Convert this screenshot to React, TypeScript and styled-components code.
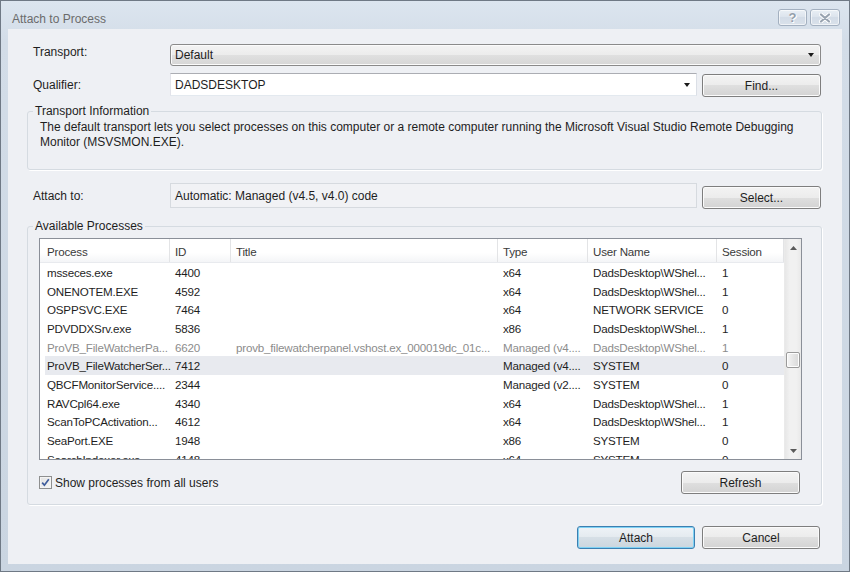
import React from "react";
import styled, { createGlobalStyle } from "styled-components";

const GlobalStyle = createGlobalStyle`
  html, body {
    margin: 0;
    padding: 0;
    background: #ccd7e3;
  }
  body {
    font-family: "Liberation Sans", Arial, sans-serif;
    font-size: 12px;
    color: #1e1e1e;
  }
  * {
    box-sizing: border-box;
  }
`;

const Window = styled.div`
  width: 850px;
  height: 572px;
  display: flex;
  flex-direction: column;
  border: 1px solid #6f7985;
  background: linear-gradient(#dce5ef, #d3dde8 40px, #cad5e1);
`;

const TitleBar = styled.div`
  height: 28px;
  display: flex;
  align-items: flex-start;
  padding: 0 9px 0 11px;
`;

const Title = styled.div`
  flex: 1;
  padding-top: 10px;
  line-height: 16px;
  color: #6b6b6b;
`;

const CaptionButtons = styled.div`
  display: flex;
  gap: 3px;
  margin-top: 8px;
`;

const CaptionButton = styled.div<{ $w: number }>`
  width: ${(p) => p.$w}px;
  height: 17px;
  border: 1px solid #a3b0c0;
  border-radius: 3px;
  background: linear-gradient(#e9eff5, #dbe3ec 50%, #d3dce7 50%, #d9e1ea);
  box-shadow: inset 0 0 0 1px rgba(255, 255, 255, 0.6);
  display: flex;
  align-items: center;
  justify-content: center;
  color: #939eab;
  font-weight: bold;
  font-size: 13px;
  text-shadow: 0 0 1px #fff, 1px 1px 0 #fff;
`;

const Frame = styled.div`
  flex: 1;
  padding: 0 7px 7px;
  display: flex;
`;

const Body = styled.div`
  flex: 1;
  background: #eef0f4;
  display: flex;
  flex-direction: column;
  padding: 15px 20px 15px 19px;
`;

const FormRow = styled.div<{ $top?: number; $h: number; $cols: string }>`
  display: grid;
  grid-template-columns: ${(p) => p.$cols};
  column-gap: 5px;
  align-items: center;
  height: ${(p) => p.$h}px;
  margin-top: ${(p) => p.$top ?? 0}px;
  padding: 0 1px 0 6px;
`;

const Label = styled.div<{ $shift?: number }>`
  line-height: 16px;
  margin-top: ${(p) => p.$shift ?? 0}px;
`;

const DropArrow = styled.span`
  width: 0;
  height: 0;
  border-left: 3.5px solid transparent;
  border-right: 3.5px solid transparent;
  border-top: 4px solid #1a1a1a;
`;

const ReadonlyCombo = styled.div`
  height: 22px;
  border: 1px solid #8a8a8a;
  border-radius: 3px;
  background: linear-gradient(#f3f3f3, #ececec 50%, #e0e0e0 50%, #d6d6d6);
  box-shadow: inset 0 0 0 1px #fbfbfb;
  display: flex;
  align-items: center;
  justify-content: space-between;
  padding: 0 6px 0 4px;
`;

const EditCombo = styled.div`
  height: 23px;
  align-self: start;
  border: 1px solid #abadb3;
  border-color: #abadb3 #dbdfe6 #e3e9ef #e2e3ea;
  background: #fff;
  display: flex;
  align-items: center;
  justify-content: space-between;
  padding: 0 6px 0 4px;
`;

const ReadonlyField = styled.div`
  height: 25px;
  align-self: start;
  border: 1px solid #d6dadf;
  background: #f1f2f5;
  display: flex;
  align-items: center;
  padding-left: 4px;
`;

const Button = styled.button<{ $default?: boolean; $w?: number; $self?: string; $mr?: number }>`
  width: ${(p) => (p.$w ? `${p.$w}px` : "auto")};
  height: 23px;
  align-self: ${(p) => p.$self ?? "auto"};
  margin-right: ${(p) => p.$mr ?? 0}px;
  font-family: inherit;
  font-size: 12px;
  color: #1e1e1e;
  padding: 0;
  border: 1px solid ${(p) => (p.$default ? "#3c7fb1" : "#7e7e7e")};
  border-radius: 3px;
  background: ${(p) =>
    p.$default
      ? "linear-gradient(#eef3f7, #e4eaef 50%, #d6dfe6 50%, #ccd6de)"
      : "linear-gradient(#f3f3f3, #ececec 50%, #dfdfdf 50%, #d3d3d3)"};
  box-shadow: inset 0 0 0 1px ${(p) => (p.$default ? "#7fd2f4" : "#fbfbfb")};
`;

const Group = styled.fieldset<{ $top: number; $pl: number; $pt: number; $pb: number }>`
  margin: ${(p) => p.$top}px 0 0;
  min-width: 0;
  border: 1px solid #d5dbe1;
  border-radius: 3px;
  box-shadow: 1px 1px 0 #fff;
  padding: ${(p) => `${p.$pt}px 19px ${p.$pb}px ${p.$pl}px`};
`;

const Legend = styled.legend<{ $ml: number }>`
  padding: 0 2px;
  margin-left: ${(p) => p.$ml}px;
  line-height: 15px;
  color: #1e1e1e;
`;

const InfoText = styled.div`
  line-height: 15px;
  white-space: nowrap;
`;

const List = styled.div`
  height: 222px;
  border: 1px solid #8a8f98;
  background: #fff;
  display: grid;
  grid-template-columns: 1fr 17px;
  overflow: hidden;
`;

const ListContent = styled.div`
  overflow: hidden;
  font-size: 11.6px;
  letter-spacing: -0.2px;
`;

const HeaderRow = styled.div`
  display: grid;
  grid-template-columns: 130px 61px 267px 90px 129px 67px;
  height: 24px;
  background: linear-gradient(#ffffff, #ffffff 60%, #f4f5f7);
  border-bottom: 1px solid #e8eaee;
`;

const HeaderCell = styled.div`
  line-height: 23px;
  padding: 1px 0 0 5px;
  color: #3a3a3a;
  border-right: 1px solid #e3e4e6;
  white-space: nowrap;
  overflow: hidden;
  &:first-child {
    padding-left: 7px;
  }
`;

const Row = styled.div<{ $selected?: boolean; $dim?: boolean }>`
  display: grid;
  grid-template-columns: 126px 60px 267px 90px 129px 67px;
  margin-left: 5px;
  height: 18.67px;
  overflow: hidden;
  background: ${(p) => (p.$selected ? "#e8eaef" : "transparent")};
  color: ${(p) => (p.$dim ? "#8c8c8c" : "#1e1e1e")};
`;

const Cell = styled.div`
  line-height: 18.67px;
  padding: 1px 0 0 5px;
  white-space: nowrap;
  overflow: hidden;
  &:first-child {
    padding-left: 2px;
  }
  &:nth-child(2) {
    padding-left: 4px;
  }
`;

const ScrollBar = styled.div`
  display: flex;
  flex-direction: column;
  background: linear-gradient(90deg, #e7e7e7, #f1f1f1 30%, #f1f1f1 70%, #e9e9e9);
  border-left: 1px solid #eaeaea;
`;

const ScrollArrow = styled.div`
  height: 17px;
  display: flex;
  align-items: center;
  justify-content: center;
`;

const ScrollTrack = styled.div`
  flex: 1;
`;

const Thumb = styled.div<{ $offset: number }>`
  margin: ${(p) => p.$offset}px 1px 0 1px;
  height: 16px;
  border: 1px solid #9a9a9a;
  border-radius: 2px;
  background: linear-gradient(90deg, #f6f6f6, #e6e6e6 50%, #d9d9d9);
  box-shadow: inset 0 0 0 1px #fdfdfd;
`;

const OptionsRow = styled.div`
  margin-top: 11px;
  height: 23px;
  display: flex;
  align-items: center;
  justify-content: space-between;
`;

const CheckLabel = styled.label`
  display: flex;
  align-items: center;
  gap: 3px;
  line-height: 16px;
`;

const CheckBox = styled.span`
  width: 13px;
  height: 13px;
  border: 1px solid #8e8f8f;
  background: linear-gradient(135deg, #e2e2e2, #f7f7f7);
  box-shadow: inset 0 0 0 1px #f4f4f4;
  display: flex;
  align-items: center;
  justify-content: center;
`;

const Footer = styled.div`
  margin-top: 21px;
  display: flex;
  justify-content: flex-end;
  gap: 7px;
  padding-right: 2px;
`;

type Proc = {
  name: string;
  id: string;
  title: string;
  type: string;
  user: string;
  session: string;
  dim?: boolean;
  selected?: boolean;
};

const processes: Proc[] = [
  { name: "msseces.exe", id: "4400", title: "", type: "x64", user: "DadsDesktop\\WShel...", session: "1" },
  { name: "ONENOTEM.EXE", id: "4592", title: "", type: "x64", user: "DadsDesktop\\WShel...", session: "1" },
  { name: "OSPPSVC.EXE", id: "7464", title: "", type: "x64", user: "NETWORK SERVICE", session: "0" },
  { name: "PDVDDXSrv.exe", id: "5836", title: "", type: "x86", user: "DadsDesktop\\WShel...", session: "1" },
  {
    name: "ProVB_FileWatcherPa...",
    id: "6620",
    title: "provb_filewatcherpanel.vshost.ex_000019dc_01c...",
    type: "Managed (v4....",
    user: "DadsDesktop\\WShel...",
    session: "1",
    dim: true,
  },
  {
    name: "ProVB_FileWatcherSer...",
    id: "7412",
    title: "",
    type: "Managed (v4....",
    user: "SYSTEM",
    session: "0",
    selected: true,
  },
  { name: "QBCFMonitorService....", id: "2344", title: "", type: "Managed (v2....", user: "SYSTEM", session: "0" },
  { name: "RAVCpl64.exe", id: "4340", title: "", type: "x64", user: "DadsDesktop\\WShel...", session: "1" },
  { name: "ScanToPCActivation...", id: "4612", title: "", type: "x64", user: "DadsDesktop\\WShel...", session: "1" },
  { name: "SeaPort.EXE", id: "1948", title: "", type: "x86", user: "SYSTEM", session: "0" },
  { name: "SearchIndexer.exe", id: "4148", title: "", type: "x64", user: "SYSTEM", session: "0" },
];

const headers = ["Process", "ID", "Title", "Type", "User Name", "Session"];

const SmallArrow = ({ up }: { up?: boolean }) => (
  <svg width="7" height="4" viewBox="0 0 7 4">
    <path d={up ? "M0 4 L3.5 0 L7 4 Z" : "M0 0 L7 0 L3.5 4 Z"} fill="#5a5a5a" />
  </svg>
);

const App = () => {
  return (
    <>
      <GlobalStyle />
      <Window>
        <TitleBar>
          <Title>Attach to Process</Title>
          <CaptionButtons>
            <CaptionButton $w={29}>?</CaptionButton>
            <CaptionButton $w={30}>
              <svg width="12" height="10" viewBox="0 0 12 10">
                <path
                  d="M2 1.5 L10 8.5 M10 1.5 L2 8.5"
                  stroke="#fff"
                  strokeWidth="4"
                  strokeLinecap="round"
                />
                <path
                  d="M2 1.5 L10 8.5 M10 1.5 L2 8.5"
                  stroke="#98a3b0"
                  strokeWidth="2.2"
                  strokeLinecap="round"
                />
              </svg>
            </CaptionButton>
          </CaptionButtons>
        </TitleBar>
        <Frame>
          <Body>
            <FormRow $h={22} $cols="132px 1fr">
              <Label $shift={-6}>Transport:</Label>
              <ReadonlyCombo>
                <span>Default</span>
                <DropArrow />
              </ReadonlyCombo>
            </FormRow>
            <FormRow $top={7} $h={24} $cols="132px 1fr 119px">
              <Label>Qualifier:</Label>
              <EditCombo>
                <span>DADSDESKTOP</span>
                <DropArrow />
              </EditCombo>
              <Button $self="end">Find...</Button>
            </FormRow>

            <Group $top={7} $pl={12} $pt={1} $pb={19}>
              <Legend $ml={-7}>Transport Information</Legend>
              <InfoText>
                The default transport lets you select processes on this computer or a remote
                computer running the Microsoft Visual Studio Remote Debugging
                <br />
                Monitor (MSVSMON.EXE).
              </InfoText>
            </Group>

            <FormRow $top={13} $h={26} $cols="132px 1fr 119px">
              <Label>Attach to:</Label>
              <ReadonlyField>Automatic: Managed (v4.5, v4.0) code</ReadonlyField>
              <Button $self="end">Select...</Button>
            </FormRow>

            <Group $top={10} $pl={11} $pt={4} $pb={10}>
              <Legend $ml={-6}>Available Processes</Legend>
              <List>
                <ListContent>
                  <HeaderRow>
                    {headers.map((h) => (
                      <HeaderCell key={h}>{h}</HeaderCell>
                    ))}
                  </HeaderRow>
                  {processes.map((p) => (
                    <Row key={p.id} $dim={p.dim} $selected={p.selected}>
                      <Cell>{p.name}</Cell>
                      <Cell>{p.id}</Cell>
                      <Cell>{p.title}</Cell>
                      <Cell>{p.type}</Cell>
                      <Cell>{p.user}</Cell>
                      <Cell>{p.session}</Cell>
                    </Row>
                  ))}
                </ListContent>
                <ScrollBar>
                  <ScrollArrow>
                    <SmallArrow up />
                  </ScrollArrow>
                  <ScrollTrack>
                    <Thumb $offset={96} />
                  </ScrollTrack>
                  <ScrollArrow>
                    <SmallArrow />
                  </ScrollArrow>
                </ScrollBar>
              </List>
              <OptionsRow>
                <CheckLabel>
                  <CheckBox>
                    <svg width="9" height="9" viewBox="0 0 9 9">
                      <path
                        d="M1.2 4.6 L3.4 7.2 L7.8 1.2"
                        fill="none"
                        stroke="#3f5d9c"
                        strokeWidth="1.7"
                      />
                    </svg>
                  </CheckBox>
                  Show processes from all users
                </CheckLabel>
                <Button $w={119} $mr={2}>
                  Refresh
                </Button>
              </OptionsRow>
            </Group>

            <Footer>
              <Button $w={118} $default>
                Attach
              </Button>
              <Button $w={118}>Cancel</Button>
            </Footer>
          </Body>
        </Frame>
      </Window>
    </>
  );
};

export default App;
